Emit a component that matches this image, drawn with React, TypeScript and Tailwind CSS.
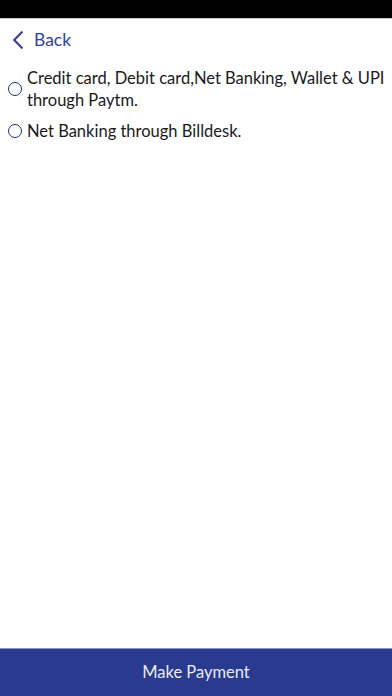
const options = [
    "Credit card, Debit card,Net Banking, Wallet & UPI through Paytm.",
    "Net Banking through Billdesk.",
];

export default function App() {
    return (
        <div className="h-[696px] w-[392px] flex flex-col bg-white font-['Lato','Noto_Sans',sans-serif]">
            <div className="h-[18px] bg-black" />
            <div className="h-px bg-[#c8c8c8]" />
            <button className="flex items-center gap-[11px] pl-[13px] mt-[11px] h-[20px] text-[#33439b]">
                <svg width="10" height="18" viewBox="0 0 10 18" fill="none" stroke="currentColor" strokeWidth="2.2" strokeLinecap="round" strokeLinejoin="round">
                    <polyline points="8.8,1.2 1.2,9 8.8,16.8" />
                </svg>
                <span className="text-[17.5px] leading-none">Back</span>
            </button>
            <div className="flex flex-col gap-[9px] mt-[17px] pr-[4px]">
                {options.map((opt) => (
                    <label key={opt} className="flex items-center gap-[5px] pl-[8px]">
                        <span className="shrink-0 w-[14px] h-[14px] rounded-full border-[1.8px] border-[#1e2b8c]" />
                        <span className="text-[16.5px] leading-[22px] text-[#1a1a1a]">{opt}</span>
                    </label>
                ))}
            </div>
            <div className="flex-1" />
            <button className="h-[48px] bg-[#293a8f] border-t border-[#8b93c7] text-[#e8eaf5] text-[16.5px]">
                Make Payment
            </button>
        </div>
    );
}
